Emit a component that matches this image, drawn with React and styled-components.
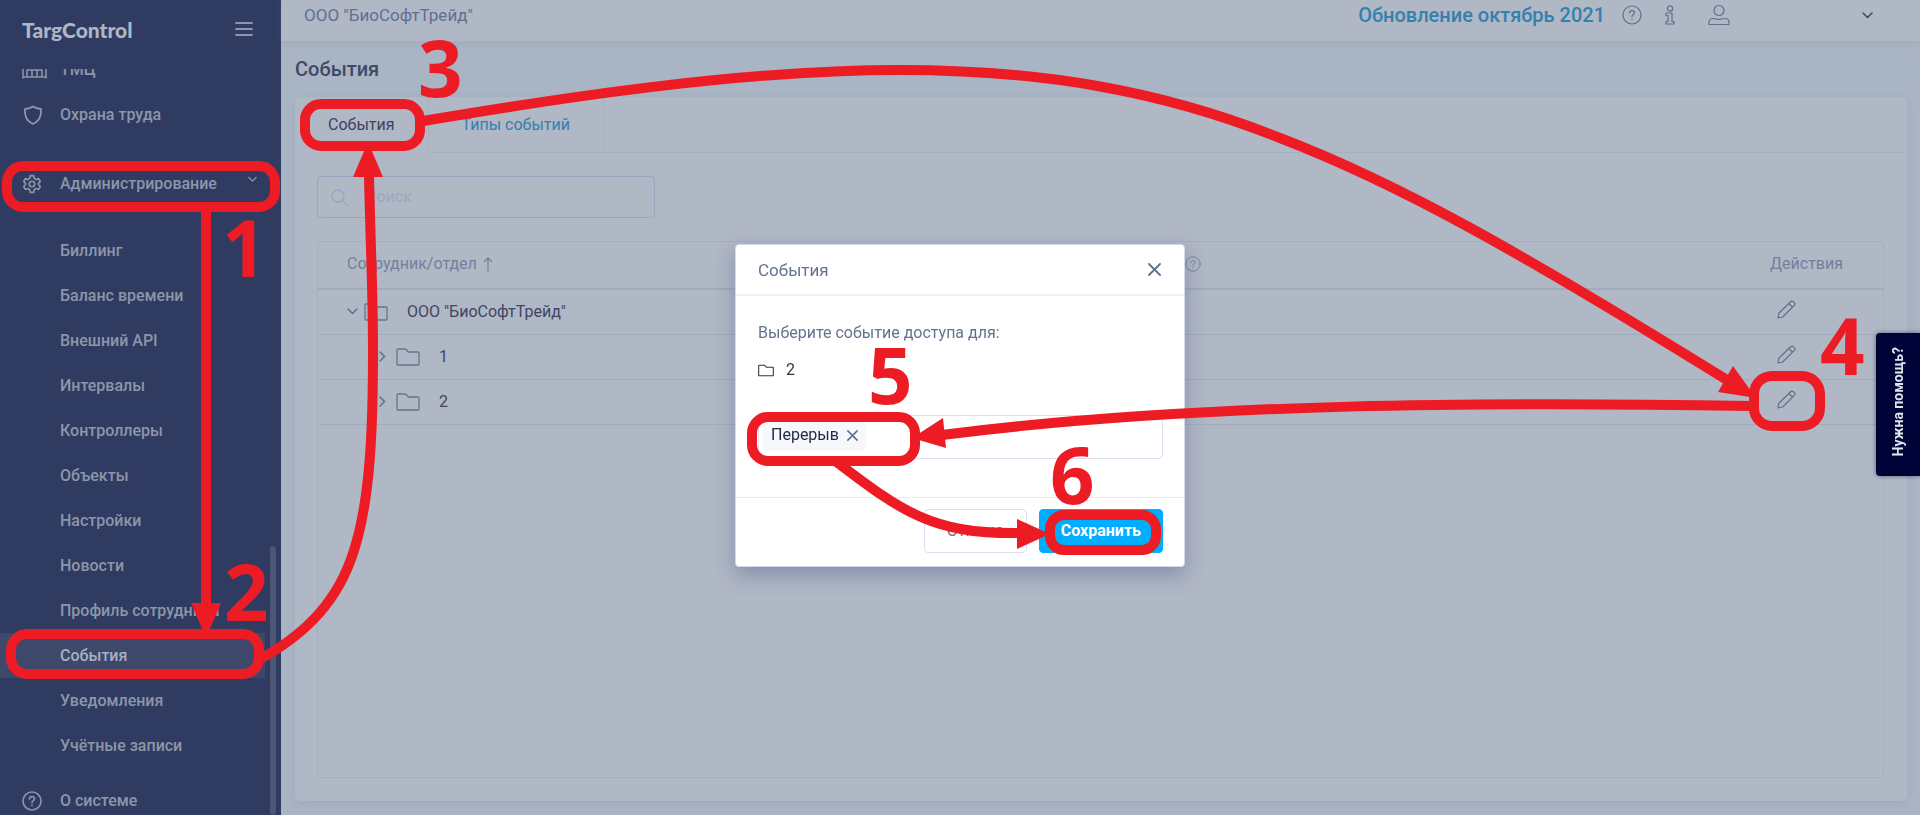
import React from "react";
import styled, { createGlobalStyle, css } from "styled-components";

const GlobalStyle = createGlobalStyle`
  * {
    box-sizing: border-box;
  }
  body {
    margin: 0;
    font-family: Roboto, "Liberation Sans", sans-serif;
    font-size: 16px;
    line-height: 20px;
    background: #a9b4c4;
    overflow: hidden;
  }
  button, input {
    font: inherit;
  }
  a {
    text-decoration: none;
    color: inherit;
  }
`;

const Page = styled.div`
  display: flex;
  height: 100vh;
`;

const Sidebar = styled.aside`
  display: flex;
  flex-direction: column;
  flex: none;
  width: 281px;
  background: #303b61;
  color: #8c96aa;
`;

const Brand = styled.div`
  display: flex;
  flex: none;
  align-items: center;
  justify-content: space-between;
  height: 69px;
  padding: 0 28px 10px 22px;
`;

const BrandName = styled.a`
  font-family: Lato, sans-serif;
  font-size: 21px;
  font-weight: 900;
  color: #adb7c7;
`;

const IconButton = styled.button`
  display: inline-flex;
  padding: 0;
  border: none;
  background: none;
  color: ${(props) => props.$color || "#5f708f"};
  cursor: pointer;
`;

const MenuScroll = styled.div`
  display: flex;
  flex: 1;
  min-height: 0;
  overflow: hidden;
`;

const Menu = styled.nav`
  display: flex;
  flex: 1;
  flex-direction: column;
  justify-content: flex-end;
  min-width: 0;
`;

const MenuItem = styled.a`
  display: flex;
  flex: none;
  align-items: center;
  height: ${(props) => (props.$last ? 28 : 45)}px;
  padding-left: 22px;
  font-weight: 500;
  white-space: nowrap;
  ${(props) => props.$active && css`
    background: #3e486b;
    color: #a6b0c1;
  `}
  svg {
    flex: none;
  }
`;

const MenuIcon = styled.span`
  display: flex;
  width: 38px;
`;

const MenuArrow = styled.span`
  display: flex;
  margin: 0 8px 8px auto;
`;

const SubMenu = styled.div`
  display: flex;
  flex: none;
  flex-direction: column;
  padding: 22px 0 19px;
`;

const MenuGap = styled.div`
  flex: none;
  height: 24px;
`;

const ScrollTrack = styled.div`
  display: flex;
  align-items: flex-end;
  width: 16px;
  padding: 0 5px;
`;

const ScrollThumb = styled.div`
  width: 6px;
  height: 36%;
  border-radius: 3px;
  background: #4b5675;
`;

const Main = styled.main`
  display: flex;
  flex: 1;
  flex-direction: column;
  min-width: 0;
`;

const TopBar = styled.header`
  display: flex;
  align-items: center;
  height: 41px;
  padding: 0 47px 11px 23px;
  background: #b0b7c5;
  box-shadow: 0 2px 8px rgba(120, 135, 160, 0.2);
  color: #5f708f;
`;

const Company = styled.span`
  font-size: 17px;
`;

const NewsLink = styled.a`
  margin: 0 17px 0 auto;
  font-size: 20px;
  font-weight: 500;
  color: #3480ae;
`;

const TopIcons = styled.div`
  display: flex;
  align-items: center;
  gap: 23px;
`;

const UserMenu = styled.div`
  display: flex;
  align-items: center;
  gap: 132px;
  margin-left: 10px;
`;

const PageTitle = styled.h1`
  margin: 0;
  padding: 17px 14px 17px;
  font-size: 20px;
  line-height: 22px;
  font-weight: 500;
  color: #3f4a66;
`;

const Card = styled.section`
  display: flex;
  flex: 1;
  flex-direction: column;
  margin: 0 13px 14px 14px;
  border-radius: 6px;
  background: #b0b7c5;
  box-shadow: 0 3px 10px rgba(120, 135, 160, 0.2);
`;

const Tabs = styled.div`
  display: flex;
  height: 56px;
  border-bottom: 1px solid #a3b0c0;
`;

const Tab = styled.button`
  height: 56px;
  padding: 0 33px;
  border: none;
  border-right: 1px solid #a3b0c0;
  background: #b0b7c5;
  color: ${(props) => (props.$active ? "#3f4260" : "#3480ae")};
  border-bottom: 1px solid ${(props) => (props.$active ? "#b0b7c5" : "#a3b0c0")};
  border-top-left-radius: ${(props) => (props.$active ? 6 : 0)}px;
`;

const CardBody = styled.div`
  display: flex;
  flex: 1;
  flex-direction: column;
  gap: 23px;
  padding: 23px 23px 23px 22px;
`;

const SearchBox = styled.label`
  display: flex;
  align-items: center;
  gap: 17px;
  width: 338px;
  height: 42px;
  padding: 0 13px;
  border: 1px solid #98a6c0;
  border-radius: 4px;
  color: #98a6c0;
`;

const SearchInput = styled.input`
  flex: 1;
  min-width: 0;
  padding: 0;
  border: none;
  outline: none;
  background: none;
  &::placeholder {
    color: #9ba7bf;
    opacity: 1;
  }
`;

const TableFrame = styled.div`
  flex: 1;
  border: 1px solid #a3b0c0;
  border-radius: 4px;
`;

const Table = styled.table`
  width: 100%;
  border-collapse: collapse;
  color: #3f4662;
`;

const HeadCell = styled.th`
  height: 47px;
  padding: 0 0 2px ${(props) => props.$left || 0}px;
  border-bottom: 2px solid #a0abbb;
  font-weight: 400;
  text-align: left;
  color: #71819c;
  svg {
    vertical-align: -3px;
  }
`;

const Cell = styled.td`
  height: 45px;
  padding: 0 0 0 ${(props) => props.$left || 0}px;
  border-bottom: 1px solid #a0abbb;
`;

const TreeLabel = styled.div`
  display: flex;
  align-items: center;
  color: #64748f;
`;

const TreeText = styled.span`
  margin-left: 19px;
  color: #3f4662;
`;

const TreeToggle = styled(IconButton)`
  width: 17px;
`;

const HelpTab = styled.button`
  position: fixed;
  right: 0;
  top: 333px;
  width: 44px;
  height: 143px;
  border: none;
  border-radius: 4px 0 0 4px;
  background: #000337;
  color: #dfe3ea;
  font-weight: 700;
  font-size: 14px;
  box-shadow: 0 0 4px rgba(0, 3, 55, 0.5);
  span {
    writing-mode: vertical-rl;
    transform: rotate(180deg);
  }
`;

const ModalLayer = styled.div`
  position: fixed;
  inset: 0 0 4px;
  display: flex;
  align-items: center;
  justify-content: center;
`;

const Modal = styled.div`
  width: 450px;
  border: 1px solid #d5dae6;
  border-radius: 4px;
  background: #fff;
  color: #64738f;
  box-shadow: 0 8px 20px rgba(80, 95, 140, 0.45);
`;

const ModalHeader = styled.div`
  display: flex;
  align-items: center;
  justify-content: space-between;
  height: 51px;
  padding: 0 23px 0 22px;
  border-bottom: 2px solid #f0f1f3;
  font-size: 17px;
`;

const ModalBody = styled.div`
  display: flex;
  flex-direction: column;
  padding: 27px 21px 38px 22px;
`;

const Target = styled.div`
  display: flex;
  align-items: center;
  gap: 12px;
  margin: 17px 0 35px;
  color: #2f3440;
`;

const TagField = styled.div`
  display: flex;
  align-items: center;
  height: 44px;
  padding: 0 4px 4px;
  border: 1px solid #dddfee;
  border-radius: 4px;
`;

const Tag = styled.span`
  display: flex;
  align-items: center;
  gap: 8px;
  height: 32px;
  padding: 0 8px;
  border-radius: 4px;
  background: #f6f8fc;
  color: #222b45;
`;

const ModalFooter = styled.div`
  display: flex;
  justify-content: flex-end;
  gap: 12px;
  padding: 11px 21px 13px;
  border-top: 1px solid #ebecf0;
`;

const Button = styled.button`
  height: 44px;
  padding: 0 ${(props) => (props.$primary ? 21 : 22)}px;
  border: 1px solid ${(props) => (props.$primary ? "#00aeff" : "#dddfee")};
  border-radius: 4px;
  background: ${(props) => (props.$primary ? "#00aeff" : "#fff")};
  color: ${(props) => (props.$primary ? "#fff" : "#64738f")};
  font-weight: ${(props) => (props.$primary ? 700 : 400)};
`;

const Guide = styled.svg`
  position: fixed;
  inset: 0;
  width: 100%;
  height: 100%;
  pointer-events: none;
  text {
    font-family: "Open Sans", sans-serif;
    font-size: 78px;
    font-weight: 700;
    fill: #ed1c24;
  }
`;

const Icon = ({ width = 20, height = width, box = "0 0 20 20", stroke = 1.3, children }) => (
  <svg
    width={width}
    height={height}
    viewBox={box}
    fill="none"
    stroke="currentColor"
    strokeWidth={stroke}
    strokeLinecap="round"
    strokeLinejoin="round"
    aria-hidden="true"
  >
    {children}
  </svg>
);

const QuestionIcon = ({ size = 20, stroke = 1.2 }) => (
  <Icon width={size} stroke={stroke}>
    <circle cx="10" cy="10" r="9" />
    <path d="M7.5 8C7.5 6.4 8.6 5.6 10 5.6S12.5 6.5 12.5 7.8C12.5 9.6 10 9.6 10 11.8M10 14v.4" />
  </Icon>
);

const FolderIcon = ({ width = 24, height = 18, stroke = 1.3 }) => (
  <Icon width={width} height={height} box="0 0 24 18" stroke={stroke}>
    <path d="M2 1h7.500l3 3H22a1 1 0 0 1 1 1v11a1 1 0 0 1-1 1H2a1 1 0 0 1-1-1V2a1 1 0 0 1 1-1z" />
  </Icon>
);

const ChevronDown = ({ width = 11, stroke = 1.5 }) => (
  <Icon width={width} height={7} box="0 0 11 7" stroke={stroke}>
    <path d="M1 1l4.500 4.500L10 1" />
  </Icon>
);

const ChevronRight = () => (
  <Icon width={7} height={11} box="0 0 7 11" stroke={1.5}>
    <path d="M1 1l4.500 4.500L1 10" />
  </Icon>
);

const CrossIcon = ({ size = 13, stroke = 1.8 }) => (
  <Icon width={size} box="0 0 13 13" stroke={stroke}>
    <path d="M1 1l11 11M12 1L1 12" />
  </Icon>
);

const PencilIcon = () => (
  <Icon width={19} box="0 0 19 19" stroke={1.2}>
    <path d="M1 18l.8-4.800L13.600 1.700a2 2 0 0 1 2.800 0l.9.9a2 2 0 0 1 0 2.800L5.700 17z M11.800 3.500l3.700 3.700" />
  </Icon>
);

const subItems = [
  "Биллинг",
  "Баланс времени",
  "Внешний API",
  "Интервалы",
  "Контроллеры",
  "Объекты",
  "Настройки",
  "Новости",
  "Профиль сотрудника",
  "События",
  "Уведомления",
  "Учётные записи",
];

const rows = [
  { name: 'ООО "БиоСофтТрейд"', left: 29, open: true },
  { name: "1", left: 61 },
  { name: "2", left: 61 },
];

// x, y, width, height, corner radius
const frames = [
  [7, 166, 268, 41, 16],
  [11, 634, 248, 40, 16],
  [305, 104, 115, 42, 16],
  [1754, 376, 66, 50, 18],
  [752, 417, 163, 44, 16],
  [1050, 515, 106, 35, 14],
];

const arrows = [
  "M206 210V605",
  "M262 658C316 628 344 590 357 540C371 490 373 420 373 350C373 290 370 230 369 175",
  "M423 121C560 98 740 70 900 70C1040 70 1160 90 1280 138C1400 184 1520 252 1727 380",
  "M1752 406C1500 402 1200 402 942 435",
  "M834 460C900 510 930 534 1018 533",
];

const heads = [
  "191,603 221,603 206,638",
  "353,177 383,177 368,142",
  "1733,366 1718,392 1756,398",
  "943,418 946,448 912,438",
  "1017,519 1017,549 1050,534",
];

const numbers = [
  ["1", 222, 277],
  ["2", 224, 621],
  ["3", 418, 97],
  ["4", 1820, 375],
  ["5", 868, 404],
  ["6", 1050, 504],
];

function SideMenu() {
  return (
    <Sidebar>
      <Brand>
        <BrandName href="#">TargControl</BrandName>
        <IconButton $color="#adb7c7" aria-label="Меню">
          <Icon width={18} height={16} box="0 0 18 16" stroke={1.6}>
            <path d="M1 1h16M1 7h16M1 13h16" />
          </Icon>
        </IconButton>
      </Brand>
      <MenuScroll>
        <Menu>
          <MenuItem href="#">
            <MenuIcon>
              <Icon width={25} height={20} box="0 0 25 20" stroke={1.5}>
                <path d="M1 5v13M24 5v13M1 17h23M5 17v-7h15v7M10 10v7M15 10v7" />
              </Icon>
            </MenuIcon>
            ТМЦ
          </MenuItem>
          <MenuItem href="#">
            <MenuIcon>
              <Icon width={22} height={20} box="0 0 22 20" stroke={1.8}>
                <path d="M11 1.500C9 3 6 3.800 3 4C2.500 10 4 16 11 19C18 16 19.500 10 19 4C16 3.800 13 3 11 1.500z" />
              </Icon>
            </MenuIcon>
            Охрана труда
          </MenuItem>
          <MenuGap />
          <MenuItem href="#">
            <MenuIcon>
              <Icon width={20} box="0 0 24 24" stroke={2}>
                <path d="M10 2h4l.7 3.200 2.300 1.300 3-1 2 3.500-2.300 2.200v1.600L22 15l-2 3.500-3-1-2.300 1.300L14 22h-4l-.7-3.200L7 17.500l-3 1L2 15l2.300-2.200v-1.600L2 9l2-3.500 3 1 2.300-1.300z" />
                <circle cx="12" cy="12" r="3.300" />
              </Icon>
            </MenuIcon>
            Администрирование
            <MenuArrow><ChevronDown width={9} /></MenuArrow>
          </MenuItem>
          <SubMenu>
            {subItems.map((item) => (
              <MenuItem key={item} href="#" $active={item === "События"}>
                <MenuIcon />
                {item}
              </MenuItem>
            ))}
          </SubMenu>
          <MenuItem href="#" $last>
            <MenuIcon><QuestionIcon stroke={1.6} /></MenuIcon>
            О системе
          </MenuItem>
        </Menu>
        <ScrollTrack>
          <ScrollThumb />
        </ScrollTrack>
      </MenuScroll>
    </Sidebar>
  );
}

function Header() {
  return (
    <TopBar>
      <Company>ООО "БиоСофтТрейд"</Company>
      <NewsLink href="#">Обновление октябрь 2021</NewsLink>
      <TopIcons>
        <IconButton aria-label="Справка"><QuestionIcon /></IconButton>
        <IconButton aria-label="Информация">
          <Icon width={10} height={20} box="0 0 10 20" stroke={1.2}>
            <circle cx="5" cy="3.500" r="2.600" />
            <path d="M1 8h6v8.500h2V19H1v-2.500h2v-6H1z" />
          </Icon>
        </IconButton>
        <UserMenu>
          <Icon width={22} height={22} box="0 0 22 22" stroke={1.2}>
            <circle cx="11" cy="6.500" r="5" />
            <path d="M1 20.500v-2c0-2.500 1.500-4 4-4 2 0 4 1 6 1s4-1 6-1c2.500 0 4 1.500 4 4v2z" />
          </Icon>
          <IconButton $color="#3f4a66" aria-label="Профиль"><ChevronDown /></IconButton>
        </UserMenu>
      </TopIcons>
    </TopBar>
  );
}

function EventsTable() {
  return (
    <TableFrame>
      <Table>
        <colgroup>
          <col />
          <col style={{ width: 585 }} />
          <col style={{ width: 113 }} />
        </colgroup>
        <thead>
          <tr>
            <HeadCell $left={29}>
              Сотрудник/отдел{" "}
              <Icon width={15} height={16} box="0 0 15 16" stroke={1.2}>
                <path d="M7 15V2M3.500 5.500L7 2l3.500 3.500" />
              </Icon>
            </HeadCell>
            <HeadCell><QuestionIcon size={16} /></HeadCell>
            <HeadCell>Действия</HeadCell>
          </tr>
        </thead>
        <tbody>
          {rows.map((row) => (
            <tr key={row.name}>
              <Cell $left={row.left}>
                <TreeLabel>
                  <TreeToggle aria-label="Развернуть">
                    {row.open ? <ChevronDown /> : <ChevronRight />}
                  </TreeToggle>
                  <FolderIcon />
                  <TreeText>{row.name}</TreeText>
                </TreeLabel>
              </Cell>
              <Cell />
              <Cell $left={7}>
                <IconButton aria-label="Изменить"><PencilIcon /></IconButton>
              </Cell>
            </tr>
          ))}
        </tbody>
      </Table>
    </TableFrame>
  );
}

function EventsModal() {
  return (
    <ModalLayer>
      <Modal role="dialog" aria-label="События">
        <ModalHeader>
          <span>События</span>
          <IconButton aria-label="Закрыть"><CrossIcon /></IconButton>
        </ModalHeader>
        <ModalBody>
          <span>Выберите событие доступа для:</span>
          <Target>
            <FolderIcon width={16} height={13} stroke={1.6} />
            2
          </Target>
          <TagField>
            <Tag>
              Перерыв
              <IconButton aria-label="Удалить"><CrossIcon size={11} /></IconButton>
            </Tag>
          </TagField>
        </ModalBody>
        <ModalFooter>
          <Button>Отмена</Button>
          <Button $primary>Сохранить</Button>
        </ModalFooter>
      </Modal>
    </ModalLayer>
  );
}

function Steps() {
  return (
    <Guide>
      <g fill="none" stroke="#ed1c24" strokeWidth="10">
        {frames.map(([x, y, w, h, r]) => (
          <rect key={`${x}-${y}`} x={x} y={y} width={w} height={h} rx={r} />
        ))}
        {arrows.map((d) => <path key={d} d={d} />)}
      </g>
      {heads.map((points) => <polygon key={points} points={points} fill="#ed1c24" />)}
      {numbers.map(([label, x, y]) => <text key={label} x={x} y={y}>{label}</text>)}
    </Guide>
  );
}

export default function App() {
  return (
    <>
      <GlobalStyle />
      <Page>
        <SideMenu />
        <Main>
          <Header />
          <PageTitle>События</PageTitle>
          <Card>
            <Tabs>
              <Tab $active>События</Tab>
              <Tab>Типы событий</Tab>
            </Tabs>
            <CardBody>
              <SearchBox>
                <Icon width={17} box="0 0 17 17" stroke={1.3}>
                  <circle cx="7" cy="7" r="6" />
                  <path d="M11.500 11.500L16 16" />
                </Icon>
                <SearchInput placeholder="Поиск" aria-label="Поиск" />
              </SearchBox>
              <EventsTable />
            </CardBody>
          </Card>
        </Main>
      </Page>
      <HelpTab><span>Нужна помощь?</span></HelpTab>
      <EventsModal />
      <Steps />
    </>
  );
}
